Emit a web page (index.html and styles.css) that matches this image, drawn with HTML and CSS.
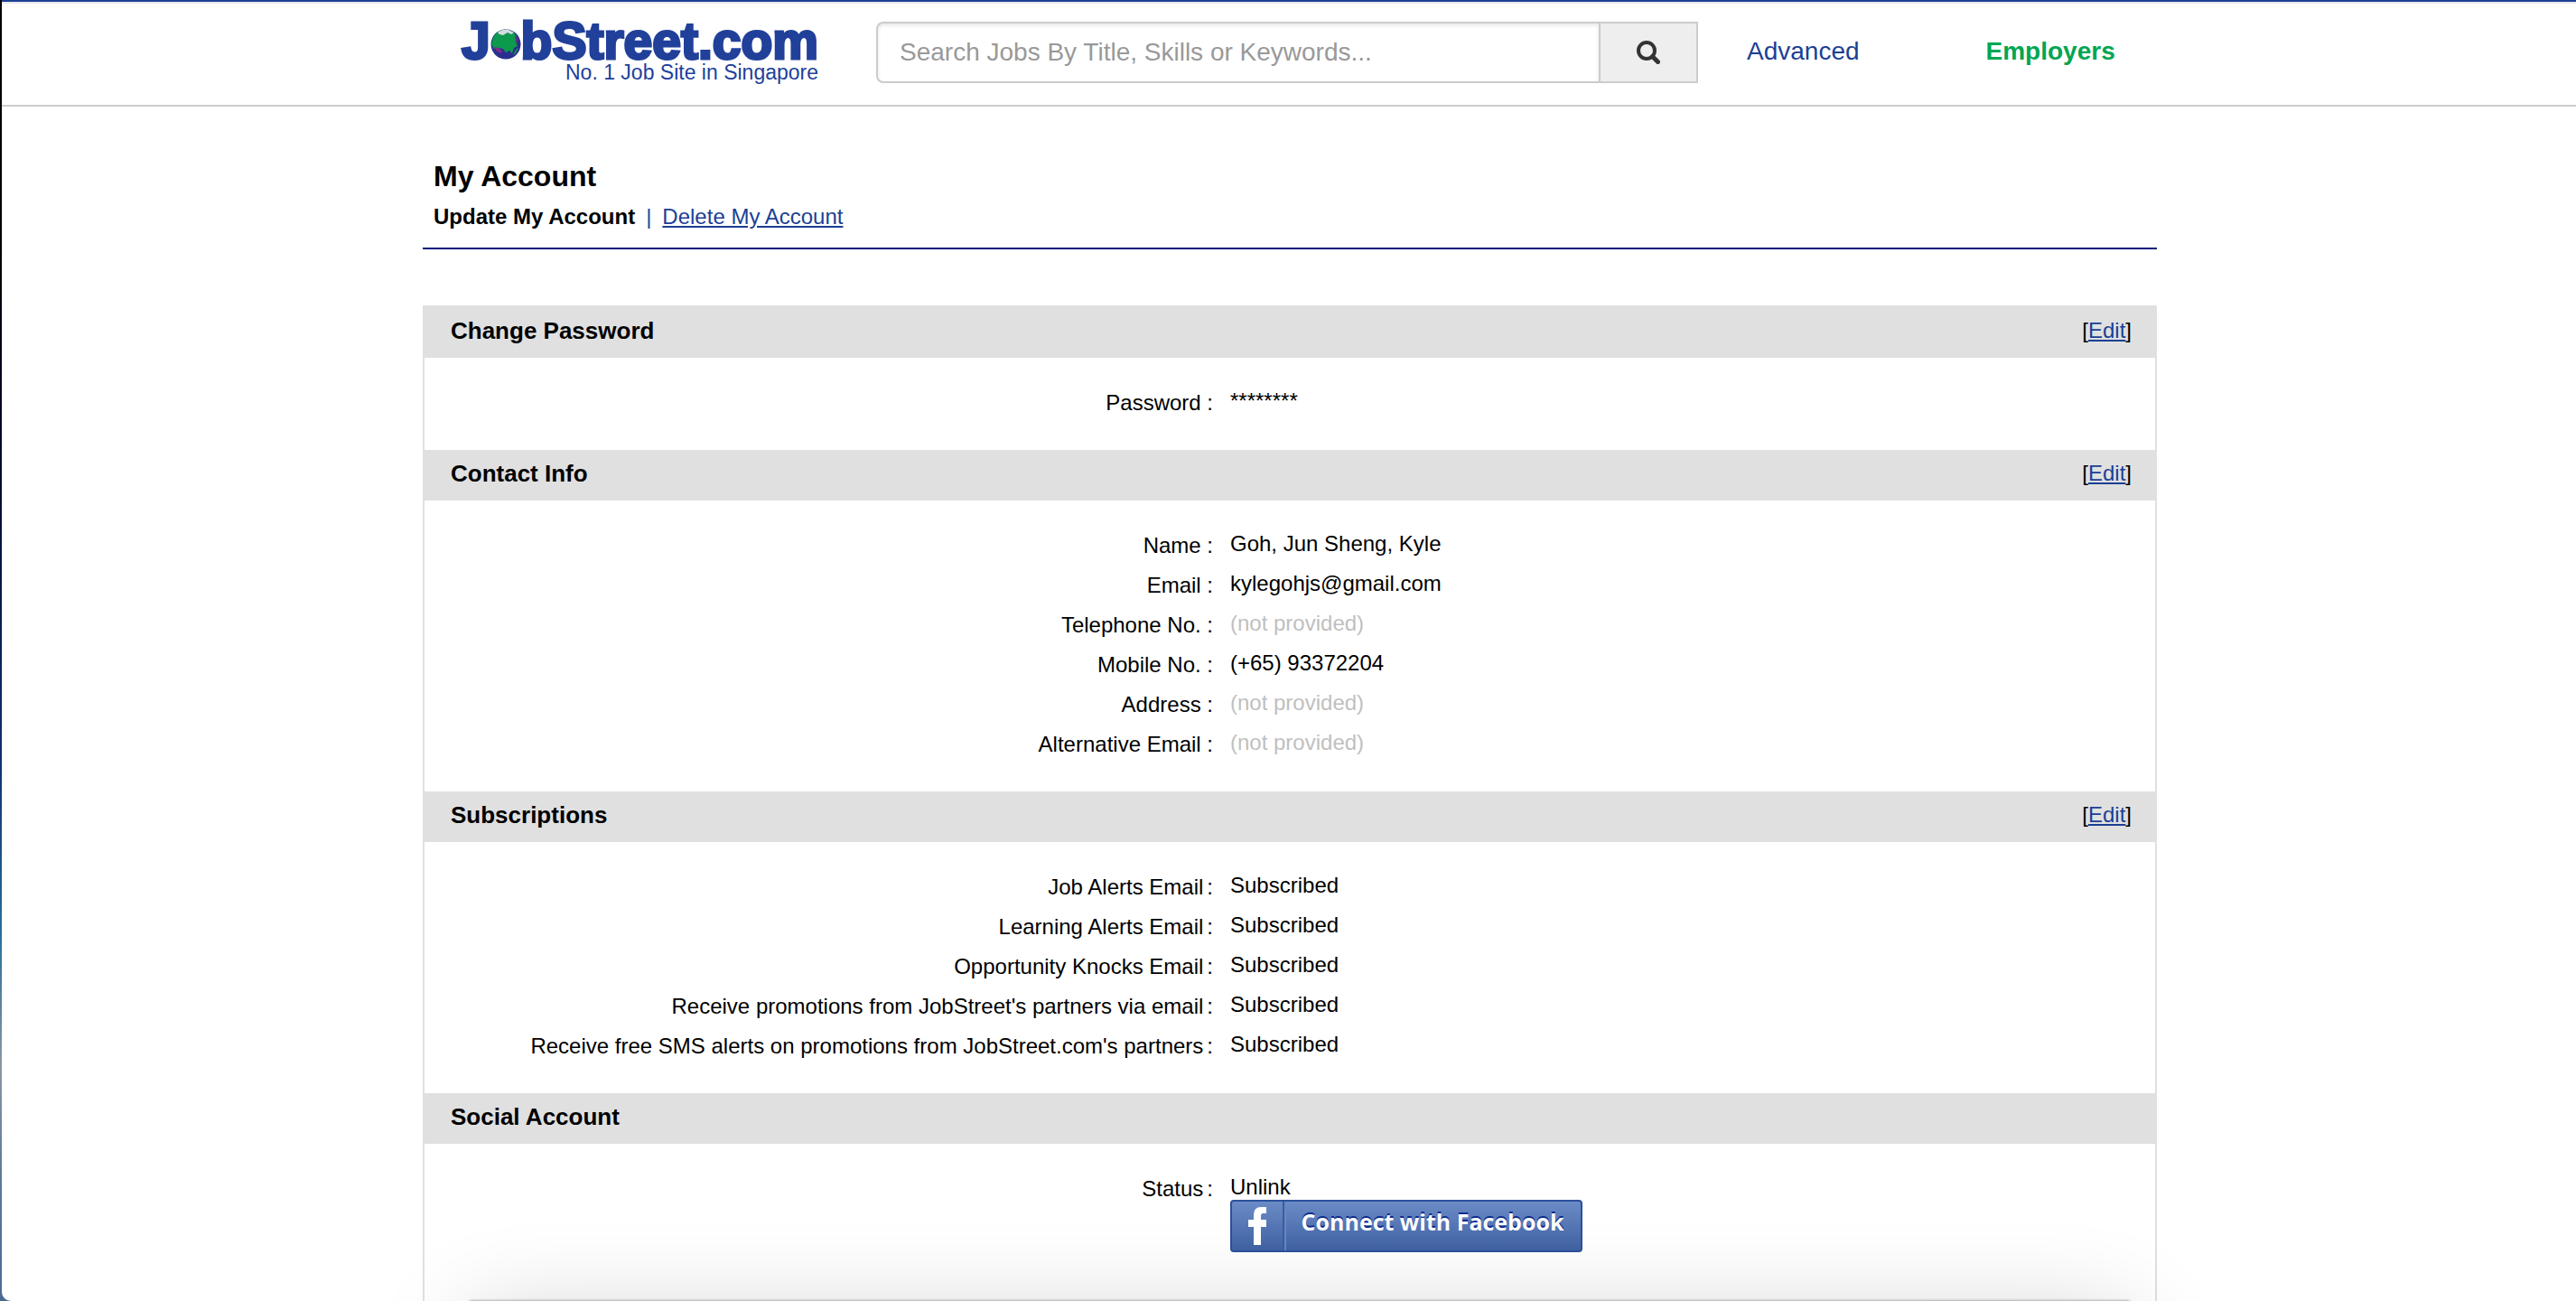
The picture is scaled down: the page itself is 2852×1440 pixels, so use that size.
FILE: index.html
```html
<!DOCTYPE html>
<html lang="en">
<head>
<meta charset="utf-8">
<title>My Account - JobStreet.com</title>
<link rel="stylesheet" href="styles.css">
</head>
<body>
<div class="page">
<header class="site-header">
  <div class="header-inner">
    <a class="logo" href="#" aria-label="JobStreet.com">
      <span class="logo-name"><span>J</span><svg class="globe" viewBox="0 0 34 34" aria-hidden="true">
        <circle cx="17" cy="17" r="16.500" fill="#2a2f8f"/>
        <path d="M3 10Q6 3 13 1Q19 0 25 3L29 8L28 14L30 19L26 21L24 27L21 24L17 26L14 22L9 21L4 22L1 17Z" fill="#0c9a4c"/>
        <path d="M8 4Q13 0 20 1L26 4L23 6L19 4L14 7L10 6Z" fill="#d5dbe0"/>
        <path d="M4 20L9 21L13 24L12 27L7 25Z" fill="#7a2d86"/>
        <path d="M29 22L31 21L28 27L25 29Z" fill="#169a5c"/>
        <path d="M27 7L31 11L30 17L28 13Z" fill="#5c2d86"/>
      </svg><span>bStreet.com</span></span>
      <span class="logo-tag">No. 1 Job Site in Singapore</span>
    </a>
    <form class="search" role="search">
      <input class="search-input" type="text" aria-label="Search jobs" placeholder="Search Jobs By Title, Skills or Keywords...">
      <button class="search-button" type="button" aria-label="Search">
        <svg class="search-icon" viewBox="0 0 26 26" aria-hidden="true"><circle cx="11" cy="11" r="9" fill="none" stroke="#333" stroke-width="4"/><path d="M17.500 17.500L23.500 23.500" stroke="#333" stroke-width="5" stroke-linecap="round"/></svg>
      </button>
    </form>
    <nav class="header-nav">
      <a class="nav-advanced" href="#">Advanced</a>
      <a class="nav-employers" href="#">Employers</a>
    </nav>
  </div>
</header>
<main class="account">
  <div class="account-head">
    <h1>My Account</h1>
    <div class="tabs"><strong>Update My Account</strong><span class="bar">|</span><a href="#">Delete My Account</a></div>
  </div>
  <div class="panel">
    <section>
      <div class="section-head"><h2>Change Password</h2><span class="edit">[<a href="#">Edit</a>]</span></div>
      <dl class="fields">
        <dt>Password :</dt><dd>********</dd>
      </dl>
    </section>
    <section>
      <div class="section-head"><h2>Contact Info</h2><span class="edit">[<a href="#">Edit</a>]</span></div>
      <dl class="fields">
        <dt>Name :</dt><dd>Goh, Jun Sheng, Kyle</dd>
        <dt>Email :</dt><dd>kylegohjs@gmail.com</dd>
        <dt>Telephone No. :</dt><dd class="empty">(not provided)</dd>
        <dt>Mobile No. :</dt><dd>(+65) 93372204</dd>
        <dt>Address :</dt><dd class="empty">(not provided)</dd>
        <dt>Alternative Email :</dt><dd class="empty">(not provided)</dd>
      </dl>
    </section>
    <section>
      <div class="section-head"><h2>Subscriptions</h2><span class="edit">[<a href="#">Edit</a>]</span></div>
      <dl class="fields">
        <dt>Job Alerts Email<span class="colon">:</span></dt><dd>Subscribed</dd>
        <dt>Learning Alerts Email<span class="colon">:</span></dt><dd>Subscribed</dd>
        <dt>Opportunity Knocks Email<span class="colon">:</span></dt><dd>Subscribed</dd>
        <dt>Receive promotions from JobStreet's partners via email<span class="colon">:</span></dt><dd>Subscribed</dd>
        <dt>Receive free SMS alerts on promotions from JobStreet.com's partners<span class="colon">:</span></dt><dd>Subscribed</dd>
      </dl>
    </section>
    <section>
      <div class="section-head"><h2>Social Account</h2></div>
      <dl class="fields">
        <dt>Status<span class="colon">:</span></dt>
        <dd>Unlink
          <button class="facebook" type="button">
            <span class="facebook-mark"><svg class="facebook-f" viewBox="0 0 20 42" aria-hidden="true"><path d="M6 42V22H0V14H6V9Q6 0 14 0H20V7H16Q14 7 14 10V14H20V22H14V42Z" fill="#fff"/></svg></span>
            <span class="facebook-text">Connect with Facebook</span>
          </button>
        </dd>
      </dl>
    </section>
  </div>
</main>
</div>
<div class="dock-shadow"></div>
</body>
</html>
```

FILE: styles.css
```css
* { box-sizing: border-box; }

body {
  margin: 0;
  background: linear-gradient(#000 0%, #000 18%, #020a30 36%, #0d2f6b 58%, #2a6f9b 72%, #8a97a3 82%, #5f7a9c 90%, #4a6a94 100%);
  color: #000;
  font-family: "Liberation Sans", Arial, sans-serif;
  font-size: 24px;
}

a { color: #1c3f94; }

.page {
  display: flex;
  flex-direction: column;
  min-height: 100vh;
  margin-left: 2px;
  padding-left: 2px;
  background: #fff;
  border-bottom-left-radius: 10px;
}

.site-header {
  margin-left: -2px;
  padding-left: 2px;
  border-top: 2px solid #1c3f94;
  border-bottom: 2px solid #ccc;
  box-shadow: inset 0 2px #e8e8e8;
}

.header-inner {
  display: flex;
  align-items: flex-start;
  max-width: 1920px;
  height: 114px;
  margin: 0 auto;
  padding: 22px 40px 0;
}

.logo {
  display: flex;
  flex: 0 0 398px;
  flex-direction: column;
  align-items: flex-end;
  color: #21409a;
  text-decoration: none;
}

.logo-name {
  display: flex;
  align-items: flex-start;
  font-size: 57px;
  font-weight: 700;
  line-height: 42px;
  -webkit-text-stroke: 3px #21409a;
}

.globe {
  width: 34px;
  height: 34px;
  margin-top: 8px;
}

.logo-tag {
  font-size: 23px;
  line-height: 28px;
}

.search {
  display: flex;
  flex: 0 1 910px;
  height: 68px;
  margin-left: 64px;
}

.search-input {
  flex: 1;
  min-width: 0;
  padding: 0 24px;
  border: 2px solid #ccc;
  border-right: 0;
  border-radius: 8px 0 0 8px;
  background: #fff;
  box-shadow: inset 0 2px 4px rgba(0, 0, 0, 0.1);
  font: 28px "Liberation Sans", Arial, sans-serif;
}

.search-input::placeholder { color: #999; }

.search-button {
  display: flex;
  align-items: center;
  justify-content: center;
  width: 110px;
  padding: 0;
  border: 2px solid #ccc;
  background: #eee;
}

.search-icon {
  width: 26px;
  height: 26px;
}

.header-nav {
  display: flex;
  gap: 140px;
  margin-left: 54px;
  font-size: 28px;
  line-height: 66px;
}

.header-nav a { text-decoration: none; }

.header-nav .nav-employers {
  color: #00a651;
  font-weight: 700;
}

.account {
  display: flex;
  flex: 1;
  flex-direction: column;
  width: 100%;
  max-width: 1920px;
  margin: 0 auto;
}

.account-head {
  padding: 54px 12px 16px;
  border-bottom: 2px solid #001a80;
}

h1 {
  margin: 0 0 4px;
  font-size: 32px;
  line-height: 46px;
}

.tabs { line-height: 36px; }

.bar {
  margin: 0 12px;
  color: #0054a6;
}

.panel {
  flex: 1;
  margin-top: 62px;
  border: 2px solid #e0e0e0;
  border-bottom: 0;
}

.section-head {
  display: flex;
  align-items: center;
  justify-content: space-between;
  height: 56px;
  padding: 0 26px 4px 29px;
  background: #e0e0e0;
}

h2 {
  margin: 0;
  font-size: 26px;
  line-height: 32px;
}

.edit { line-height: 28px; }

.fields {
  display: grid;
  grid-template-columns: 873fr 1024fr;
  column-gap: 19px;
  margin: 0;
  padding: 28px 0 30px;
}

dt {
  line-height: 44px;
  text-align: right;
}

.colon { margin-left: 4px; }

dd {
  margin: 0;
  padding-top: 6px;
  line-height: 28px;
}

.empty { color: #bfbfbf; }

.facebook {
  display: flex;
  width: 390px;
  height: 58px;
  padding: 0;
  border: 2px solid #2c509c;
  border-radius: 4px;
  background: linear-gradient(#6b8bc6, #4062a2);
  color: #fff;
}

.facebook-mark {
  display: flex;
  align-items: center;
  justify-content: center;
  width: 58px;
  height: 54px;
  border-right: 2px solid #3a5ca0;
  box-shadow: 2px 0 #6587c4;
}

.facebook-f {
  width: 20px;
  height: 42px;
}

.facebook-text {
  flex: 1;
  font: 700 25px/44px "Open Sans", "Noto Sans", sans-serif;
  text-shadow: 0 -2px #0c2b8c;
}

/* Soft shadow cast by the window docked below the page */
.dock-shadow {
  position: fixed;
  right: 494px;
  bottom: -200px;
  left: 520px;
  height: 200px;
  box-shadow: 0 0 3px rgba(0, 0, 0, 0.5), 0 20px 110px rgba(0, 0, 0, 0.2);
  pointer-events: none;
}
```
